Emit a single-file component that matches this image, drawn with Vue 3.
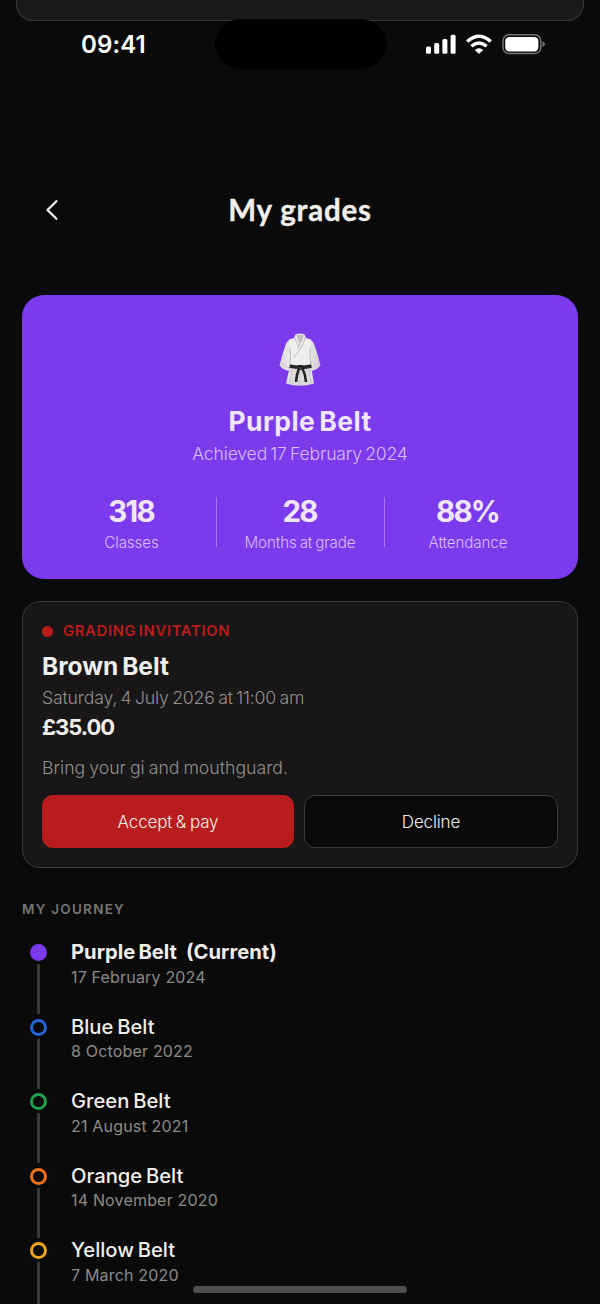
<script setup>
const stats = [
  { value: '318', label: 'Classes' },
  { value: '28', label: 'Months at grade' },
  { value: '88%', label: 'Attendance' }
]
const journey = [
  { name: 'Purple Belt', date: '17 February 2024', tone: 'purple', current: true },
  { name: 'Blue Belt', date: '8 October 2022', tone: 'blue' },
  { name: 'Green Belt', date: '21 August 2021', tone: 'green' },
  { name: 'Orange Belt', date: '14 November 2020', tone: 'orange' },
  { name: 'Yellow Belt', date: '7 March 2020', tone: 'yellow' }
]
</script>

<template>
  <main class="screen">
    <div class="previous-card"></div>
    <div class="island"></div>
    <header class="status">
      <span class="time">09:41</span>
      <svg class="status-icons" width="120" height="22" viewBox="0 0 120 22" aria-hidden="true">
        <g fill="#fff">
          <rect x="1" y="12.5" width="5" height="7.3" rx="1.5" />
          <rect x="9.2" y="9.1" width="5" height="10.7" rx="1.5" />
          <rect x="17.4" y="4.9" width="5" height="14.9" rx="1.5" />
          <rect x="25.6" y="0.8" width="5" height="19" rx="1.5" />
          <path d="M54 19.500L50.200 16Q54 13.100 57.800 16Z" stroke="#fff" stroke-width=".6" stroke-linejoin="round" />
        </g>
        <g fill="none" stroke="#fff" stroke-width="3.400">
          <path d="M42.200 7.600Q54 -3.200 65.800 7.600" />
          <path d="M46.400 12.200Q54 5.700 61.600 12.200" />
        </g>
        <rect x="78" y=".8" width="37.800" height="18.800" rx="6" fill="none" stroke="#747474" stroke-width="1.500" />
        <rect x="80.200" y="3" width="33.200" height="14.400" rx="4.200" fill="#fff" />
        <path d="M117.400 7.200Q120 8.600 120 10.200Q120 11.900 117.400 13.200Z" fill="#747474" />
      </svg>
    </header>

    <nav class="titlebar">
      <svg class="back" width="16" height="22" viewBox="0 0 16 22" aria-hidden="true">
        <path d="M13.400 2.200L4.500 11L13.400 19.800" fill="none" stroke="#f0eeea" stroke-width="2.300" stroke-linecap="round" stroke-linejoin="round" />
      </svg>
      <h1>My grades</h1>
    </nav>

    <section class="hero">
      <svg class="gi" width="44" height="54" viewBox="0 0 44 54" aria-hidden="true">
        <defs>
          <linearGradient id="cloth" x1="0" x2="1" y1="0" y2="0">
            <stop offset="0" stop-color="#d6d4d6" /><stop offset=".3" stop-color="#efeeed" />
            <stop offset=".7" stop-color="#ecebea" /><stop offset="1" stop-color="#cfcdce" />
          </linearGradient>
          <linearGradient id="skirt" x1="0" x2="0" y1="0" y2="1">
            <stop offset="0" stop-color="#cfcccd" /><stop offset=".5" stop-color="#e6e4e4" /><stop offset="1" stop-color="#d8d5d6" />
          </linearGradient>
        </defs>
        <path d="M13 6Q9 7.500 7.500 12Q4 22 1.500 32.500Q4.500 36.500 10.500 38L14.500 26ZM31 6Q35 7.500 36.500 12Q40 22 42.500 32.500Q39.500 36.500 33.500 38L29.500 26Z" fill="url(#cloth)" />
        <path d="M12 33L8 50.500Q22 55 36 50.500L33 33Z" fill="url(#skirt)" />
        <path d="M17.500 1.500Q22 -.5 26.500 1.500L28 5L33 6.500L32 20Q32 28 33.500 34H11.500Q13 28 12 20L11 6.500L16 5Z" fill="#efeeec" />
        <path d="M11.800 15Q13.500 23 11.800 31M32.400 15Q31 23 33 31" fill="none" stroke="#bbb8b9" stroke-width="1" />
        <path d="M18.500 2Q22 .8 25.500 2L23.500 7L21.500 10.500Q19.500 6 18.500 2Z" fill="#c5c2c1" />
        <path d="M16.500 4Q18.500 10 21.700 14.500M27.500 4Q25.500 13 15.500 25M25.300 2.500Q24 9 19 15.500" stroke="#b2afac" stroke-width=".8" fill="none" />
        <path d="M2.500 30L10.800 34.800M41.500 30L33.200 34.800M14 38L12 50M31 38L33 50M22 39V52" stroke="#bab7b8" stroke-width=".7" />
        <path d="M11.800 31.200Q22 34 33.200 31.200L33.800 34.800Q23 37.500 11.400 34.800Z" fill="#27272a" />
        <path d="M20 32L25 32.200L25.500 36.500L20 37Z" fill="#1b1b1f" />
        <path d="M21 35.500Q18.500 41.500 18 49M24.500 35.500Q27.500 41.500 28 49" fill="none" stroke="#252529" stroke-width="2.600" />
        <path d="M20.500 34.500L24 35.500" stroke="#66666c" stroke-width=".7" />
      </svg>
      <h2>Purple Belt</h2>
      <p class="achieved">Achieved 17 February 2024</p>
      <div class="stats">
        <div v-for="s in stats" :key="s.label" class="stat">
          <strong>{{ s.value }}</strong>
          <span class="label">{{ s.label }}</span>
        </div>
      </div>
    </section>

    <section class="invite">
      <div class="eyebrow"><i></i><span>GRADING INVITATION</span></div>
      <h3>Brown Belt</h3>
      <p class="when">Saturday, 4 July 2026 at 11:00 am</p>
      <p class="price">£35.00</p>
      <p class="note">Bring your gi and mouthguard.</p>
      <div class="actions">
        <button class="accept">Accept &amp; pay</button>
        <button class="decline">Decline</button>
      </div>
    </section>

    <h4>MY JOURNEY</h4>
    <ol class="journey">
      <li v-for="j in journey" :key="j.name" :class="[j.tone, { current: j.current }]">
        <div class="track"><span class="dot"></span><span class="line"></span></div>
        <div class="info">
          <div class="name">{{ j.name }}<span v-if="j.current" class="tag">(Current)</span></div>
          <div class="date">{{ j.date }}</div>
        </div>
      </li>
    </ol>
    <div class="home"></div>
  </main>
</template>

<style>
body { background: #0a0a0a; overflow: hidden; }
</style>
<style scoped>
* { box-sizing: border-box; }
h1, h2, h3, h4, p, ol { margin: 0; padding: 0; }
.screen { position: relative; width: 600px; height: 1304px; overflow: hidden; background: #0a0a0a; color: #f0eeea; font-family: Inter, sans-serif; white-space: nowrap; }
.previous-card { height: 21px; margin: 0 16px; background: #1a1917; border: 1px solid #3b3a39; border-top: 0; border-radius: 0 0 17px 17px; }
.island { position: absolute; left: 215px; top: 19px; width: 171px; height: 50px; border-radius: 25px; background: #000; }
.status { height: 48px; padding: 0 55px 0 81px; display: flex; justify-content: space-between; align-items: center; }
.time { font-size: 24px; line-height: 28px; font-weight: 560; color: #fff; letter-spacing: .1px; }
.titlebar { height: 60px; margin-top: 111px; display: flex; align-items: center; justify-content: center; position: relative; }
.back { position: absolute; left: 43px; top: 19px; }
h1 { font: 700 29.5px/60px Lato, sans-serif; letter-spacing: .8px; padding-bottom: 1px; -webkit-text-stroke: .35px #f0eeea; }
.hero { margin: 54px 22px 0; height: 284px; border-radius: 22px; background: #7c3aed; display: flex; flex-direction: column; align-items: center; padding-top: 38px; position: relative; top: .5px; }
.gi { position: relative; top: .5px; }
h2 { margin-top: 17px; font-size: 26.5px; line-height: 34px; font-weight: 700; color: #f0e6fb; letter-spacing: .4px; word-spacing: -2.5px; }
.achieved { margin-top: 4px; font-size: 17.6px; line-height: 24px; font-weight: 350; color: #d6befa; letter-spacing: -.17px; word-spacing: -1.5px; }
.stats { margin-top: 31px; width: 504px; display: grid; grid-template-columns: repeat(3, 1fr); }
.stat { height: 50px; display: flex; flex-direction: column; align-items: center; position: relative; left: -.5px; }
.stat + .stat { border-left: 1.5px solid #a678f2; }
.stat strong { font-size: 29.5px; line-height: 29px; font-weight: 700; color: #f0e6fb; letter-spacing: -1.8px; margin-left: -1px; }
.label { font-size: 15.2px; line-height: 34px; font-weight: 350; color: #d6befa; letter-spacing: -.12px; word-spacing: -1.2px; }
.invite { margin: 23px 22px 0; height: 267px; border: 1px solid #3b3a39; border-radius: 18px; background: #181616; padding: 18px 19px 0; }
.eyebrow { display: flex; align-items: center; gap: 10px; height: 22px; font-size: 14.8px; font-weight: 640; color: #b91c1c; letter-spacing: .68px; word-spacing: -2px; }
.eyebrow i { width: 11px; height: 11px; border-radius: 50%; background: #b91c1c; }
h3 { margin-top: 8px; font-size: 24.5px; line-height: 32px; font-weight: 700; word-spacing: -2px; }
.when, .note { font-size: 17.7px; line-height: 31px; font-weight: 350; color: #929090; }
.when { letter-spacing: -.19px; word-spacing: -1.3px; }
.price { font-size: 22px; line-height: 29px; font-weight: 700; letter-spacing: -1px; }
.note { margin-top: 10px; word-spacing: -1px; }
.actions { margin-top: 12px; display: grid; grid-template-columns: 252px 254px; gap: 10px; }
button { height: 53px; border-radius: 11px; border: 0; font: 350 17px/52px Inter, sans-serif; color: #f0eeea; padding: 0; letter-spacing: -.15px; word-spacing: -1px; }
.accept { background: #b91c1c; }
.decline { background: #0a0a0a; border: 1px solid #3b3a39; line-height: 50px; }
h4 { margin: 31px 22px 0; font-size: 13.5px; line-height: 21px; font-weight: 600; color: #777575; letter-spacing: 1.25px; }
.journey { margin: 19px 30px 0; list-style: none; }
li { height: 74.6px; display: flex; gap: 24px; }
.track { width: 17px; display: flex; flex-direction: column; align-items: center; padding-top: 5px; }
.dot { width: 17px; height: 17px; border-radius: 50%; border: 3px solid; flex: none; }
.line { width: 2.5px; height: 50px; margin-top: 3px; background: #3a3937; flex: none; }
.name { font-size: 20.2px; line-height: 25.5px; font-weight: 500; word-spacing: -1.6px; }
.current .name { font-weight: 700; }
.tag { margin-left: 9px; }
.date { font-size: 16px; line-height: 24px; color: #8c8a88; letter-spacing: .18px; }
.purple .dot { border-color: #7c3aed; background: #7c3aed; }
.blue .dot { border-color: #2563d9; }
.green .dot { border-color: #20a050; }
.orange .dot { border-color: #f0731c; }
.yellow .dot { border-color: #eba51c; }
.home { position: absolute; left: 193px; top: 1286px; width: 214px; height: 7px; border-radius: 4px; background: #4e4e4e; }
</style>
